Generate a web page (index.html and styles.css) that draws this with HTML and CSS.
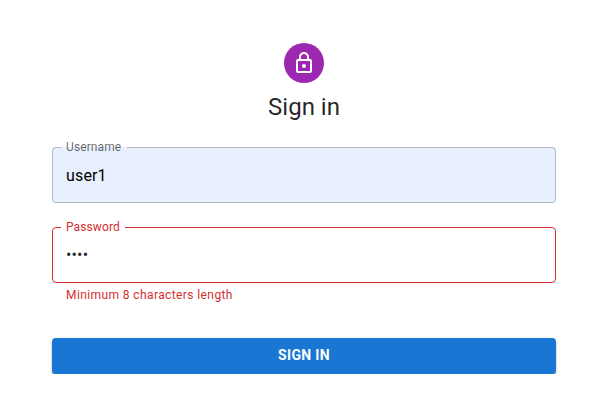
FILE: index.html
```html
<!DOCTYPE html>
<html lang="en">
<head>
<meta charset="utf-8">
<title>Sign in</title>
<link rel="stylesheet" href="styles.css">
</head>
<body>
<main class="panel">
  <div class="avatar">
    <svg viewBox="0 0 24 24" aria-hidden="true"><path d="M12 17c1.1 0 2-.9 2-2s-.9-2-2-2-2 .9-2 2 .9 2 2 2zm6-9h-1V6c0-2.76-2.24-5-5-5S7 3.24 7 6v2H6c-1.100 0-2 .9-2 2v10c0 1.100.9 2 2 2h12c1.100 0 2-.9 2-2V10c0-1.100-.9-2-2-2zM8.900 6c0-1.710 1.390-3.100 3.100-3.100s3.100 1.390 3.100 3.100v2H8.900V6zM18 20H6V10h12v10z"/></svg>
  </div>
  <h1 class="title">Sign in</h1>
  <form class="form">
    <div class="field">
      <div class="control filled">
        <input class="input" id="username" type="text" value="user1">
        <fieldset class="outline"><legend><span>Username</span></legend></fieldset>
        <label class="label" for="username">Username</label>
      </div>
    </div>
    <div class="field error">
      <div class="control">
        <input class="input" id="password" type="password" value="pass">
        <fieldset class="outline"><legend><span>Password</span></legend></fieldset>
        <label class="label" for="password">Password</label>
      </div>
      <p class="helper">Minimum 8 characters length</p>
    </div>
    <button class="submit" type="button">Sign in</button>
  </form>
</main>
</body>
</html>
```
FILE: styles.css
```css
* { box-sizing: border-box; }
body {
  margin: 0;
  background: #fff;
  color: rgba(0, 0, 0, .87);
  font-family: Roboto, "Liberation Sans", sans-serif;
}
.panel {
  width: 504px;
  margin-left: 52px;
  padding-top: 43px;
  display: flex;
  flex-direction: column;
  align-items: center;
}
.avatar {
  width: 40px;
  height: 40px;
  border-radius: 50%;
  background: #9c27b0;
  display: flex;
  align-items: center;
  justify-content: center;
}
.avatar svg { width: 24px; height: 24px; fill: #fff; }
.title {
  margin: 8px 0 0;
  font-size: 24px;
  font-weight: 400;
  line-height: 32px;
}
.form { width: 100%; margin-top: 24px; }
.field { margin-bottom: 24px; }
.control { position: relative; height: 56px; border-radius: 4px; }
.input {
  display: block;
  width: 100%;
  height: 56px;
  padding: 16.5px 14px;
  border: 0;
  border-radius: 4px;
  outline: 0;
  background: transparent;
  color: rgba(0, 0, 0, .87);
  font: 400 16px/23px Roboto, "Liberation Sans", sans-serif;
  letter-spacing: .15px;
}
.error .input { padding: 15.5px 14px 17.5px; }
.filled .input { background: #e8f0fe; color: #000; }
.outline {
  position: absolute;
  inset: -5px 0 0;
  margin: 0;
  padding: 0 8px;
  min-width: 0;
  border: 1px solid rgba(0, 0, 0, .23);
  border-radius: 4px;
  pointer-events: none;
}
.outline legend {
  height: 11px;
  padding: 0;
  font-size: 12px;
  line-height: 11px;
  letter-spacing: .15px;
  visibility: hidden;
}
.outline legend span { display: inline-block; padding: 0 5px; }
.label {
  position: absolute;
  left: 14px;
  top: -8px;
  color: rgba(0, 0, 0, .6);
  font-size: 12px;
  line-height: 17px;
  letter-spacing: .11px;
}
.error .outline { border-color: #d32f2f; }
.error .label, .helper { color: #d32f2f; }
.helper {
  margin: 2px 14px 0;
  padding-bottom: 1px;
  font-size: 12px;
  line-height: 20px;
  letter-spacing: .4px;
}
.submit {
  display: block;
  width: 100%;
  height: 36px;
  margin-top: 32px;
  padding: 5px 16px 7px;
  border: 0;
  border-radius: 4px;
  background: #1976d2;
  color: #fff;
  font: 700 14px/24px Roboto, "Liberation Sans", sans-serif;
  letter-spacing: .35px;
  text-transform: uppercase;
  box-shadow: 0 3px 1px -2px rgba(0, 0, 0, .2), 0 2px 2px rgba(0, 0, 0, .14), 0 1px 5px rgba(0, 0, 0, .12), 0 1px 1px rgba(0, 0, 0, .2);
}
```
